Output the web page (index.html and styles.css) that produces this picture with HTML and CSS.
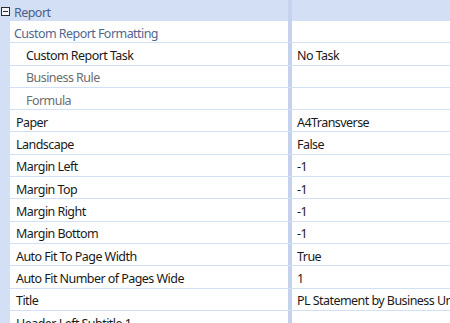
FILE: index.html
```html
<!DOCTYPE html>
<html>
<head>
<meta charset="utf-8">
<link rel="stylesheet" href="styles.css">
</head>
<body>
<div class="grid">
  <div class="row header">
    <div class="name"><span class="toggle"></span><span class="label">Report</span></div>
  </div>
  <div class="row category"><div class="name">Custom Report Formatting</div><div class="val"></div></div>
  <div class="row sub"><div class="name">Custom Report Task</div><div class="val">No Task</div></div>
  <div class="row sub dim"><div class="name">Business Rule</div><div class="val"></div></div>
  <div class="row sub dim"><div class="name">Formula</div><div class="val"></div></div>
  <div class="row"><div class="name">Paper</div><div class="val">A4Transverse</div></div>
  <div class="row"><div class="name">Landscape</div><div class="val">False</div></div>
  <div class="row"><div class="name">Margin Left</div><div class="val">-1</div></div>
  <div class="row"><div class="name">Margin Top</div><div class="val">-1</div></div>
  <div class="row"><div class="name">Margin Right</div><div class="val">-1</div></div>
  <div class="row"><div class="name">Margin Bottom</div><div class="val">-1</div></div>
  <div class="row"><div class="name">Auto Fit To Page Width</div><div class="val">True</div></div>
  <div class="row"><div class="name">Auto Fit Number of Pages Wide</div><div class="val">1</div></div>
  <div class="row"><div class="name">Title</div><div class="val">PL Statement by Business Unit</div></div>
  <div class="row"><div class="name">Header Left Subtitle 1</div><div class="val"></div></div>
</div>
</body>
</html>
```
FILE: styles.css
```css
html, body {
  margin: 0;
  padding: 0;
  background: #ffffff;
  overflow: hidden;
}
.grid {
  width: 450px;
  font-family: "Noto Sans", "Open Sans", sans-serif;
  font-size: 12.5px;
  letter-spacing: -0.55px;
  color: #1a1a1a;
  background: #d3dff5;
}
.row {
  display: flex;
  height: 21.3px;
  margin-left: 10px;
  border-bottom: 1px solid #d3dff5;
  background: #ffffff;
  align-items: stretch;
}
.row .name,
.row .val {
  display: flex;
  align-items: center;
  padding-top: 3px;
  box-sizing: border-box;
  white-space: nowrap;
  overflow: hidden;
}
.row .name {
  width: 278px;
  padding-left: 6px;
  flex: none;
}
.row .val {
  flex: 1;
  padding-left: 5px;
  border-left: 4px solid #c4d2ee;
}
.row.header {
  margin-left: 0;
  background: #d3dff5;
  height: 21px;
  border-bottom: 0;
}
.row.header .name {
  padding-left: 1px;
  width: 292px;
  color: #4b5f87;
  border-right: 4px solid #c4d2ee;
}
.toggle {
  width: 7px;
  height: 7px;
  border: 1px solid #2b2b2b;
  position: relative;
  margin-right: 4px;
  margin-top: -2px;
  background: #f4f6fb;
  flex: none;
}
.toggle::after {
  content: "";
  position: absolute;
  left: 1px;
  right: 1px;
  top: 3px;
  height: 1px;
  background: #2b2b2b;
}
.row.category .name {
  padding-left: 4px;
  color: #52668f;
}
.row.sub .name {
  padding-left: 16px;
}
.row.dim .name {
  color: #6d6d6d;
}
```
